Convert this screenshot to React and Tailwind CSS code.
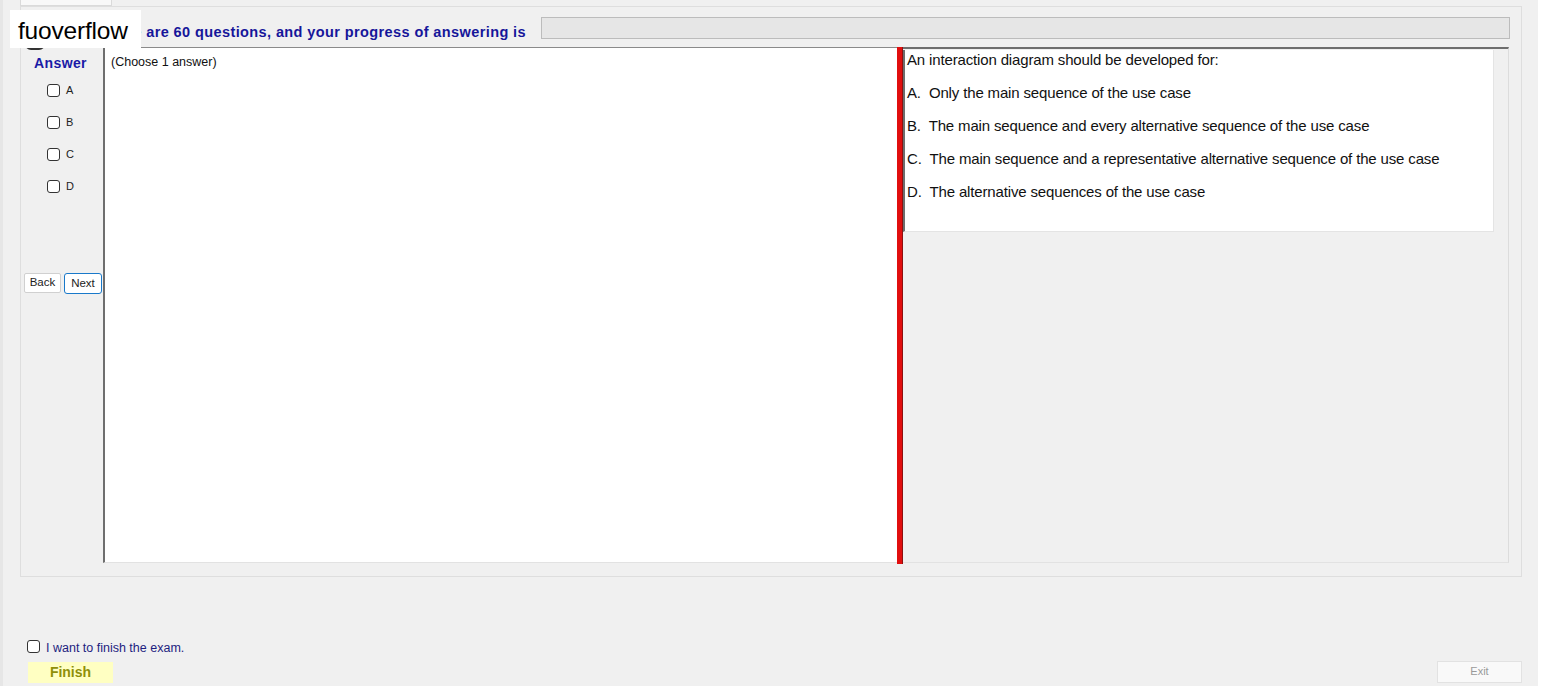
import React from "react";

const Box = () => (
  <span className="inline-block w-[13px] h-[13px] rounded-[3px] border border-[#333] bg-white" />
);

const options = [
  "A.  Only the main sequence of the use case",
  "B.  The main sequence and every alternative sequence of the use case",
  "C.  The main sequence and a representative alternative sequence of the use case",
  "D.  The alternative sequences of the use case",
];

export default function App() {
  return (
    <div className="relative w-[1542px] h-[690px] bg-white overflow-hidden font-['Liberation_Sans',Arial,sans-serif]">
      {/* Window */}
      <div className="w-[1538px] h-[686px] bg-[#f0f0f0] border-l-[3px] border-[#e6e6e6] flex flex-col">
        {/* tab strip */}
        <div className="h-[6px] flex">
          <div className="ml-[17px] w-[92px] h-[6px] bg-[#f8f8f8] border-x border-b border-[#dadada]" />
        </div>

        {/* Group box */}
        <div className="ml-[17px] w-[1502px] h-[571px] border border-[#dedede] bg-[#f0f0f0] flex flex-col">
          {/* header */}
          <div className="flex items-start mt-[10px] h-[22px]">
            <div className="w-[520px] flex justify-end pr-[15px] pt-[5px]">
              <span className="text-[14.5px] leading-[20px] font-bold text-[#16169a] whitespace-nowrap tracking-[0.4px]">
                There are 60 questions, and your progress of answering is
              </span>
            </div>
            <div className="w-[969px] h-[22px] border border-[#bcbcbc] bg-[#e6e6e6]" />
          </div>

          {/* content */}
          <div className="flex mt-[8px] ml-[1px] h-[516px]">
            {/* answer column */}
            <div className="w-[81px] flex flex-col">
              <div className="pl-[12px] pt-[6px] text-[14px] leading-[20px] font-bold text-[#1a1aa6] tracking-[0.4px]">Answer</div>
              <div className="flex flex-col gap-[19px] pl-[25px] mt-[11px]">
                {["A", "B", "C", "D"].map((l) => (
                  <label key={l} className="flex items-center gap-[6px] h-[13px]">
                    <Box />
                    <span className="text-[11px] text-[#222]">{l}</span>
                  </label>
                ))}
              </div>
              <div className="flex gap-[3px] pl-[2px] mt-[80px]">
                <button className="w-[37px] h-[20px] bg-white border border-[#d0d0d0] rounded-[2px] text-[11.5px] text-[#222]">
                  Back
                </button>
                <button className="w-[38px] h-[21px] bg-white border border-[#1979ca] rounded-[3px] text-[11.5px] text-[#222]">
                  Next
                </button>
              </div>
            </div>

            {/* main text area */}
            <div className="w-[794px] h-[516px] bg-white border-l-2 border-t border-b border-l-[#6e6e6e] border-t-[#8a8a8a] border-b-[#e2e2e2] pl-[6px] pt-[1px]">
              <span className="text-[12.5px] text-[#111]">(Choose 1 answer)</span>
            </div>

            {/* splitter */}
            <div className="w-[6px] h-[517px] bg-[#e10f0f] border-r border-[#8e1010]" />

            {/* right panel */}
            <div className="w-[606px] h-[516px] border-t-2 border-r border-b border-t-[#6e6e6e] border-r-[#dcdcdc] border-b-[#e2e2e2] bg-[#f0f0f0]">
              <div className="w-[591px] h-[182px] mt-[1px] bg-white border-l-2 border-r border-b border-l-[#6e6e6e] border-r-[#e4e4e4] border-b-[#e4e4e4] pl-[2px] pt-[2px]">
                <div className="text-[15px] text-[#111] leading-[16px] tracking-[-0.15px]">
                  An interaction diagram should be developed for:
                </div>
                {options.map((o) => (
                  <div key={o} className="text-[15px] text-[#111] leading-[16px] mt-[17px] whitespace-pre tracking-[-0.15px]">
                    {o}
                  </div>
                ))}
              </div>
            </div>
          </div>
        </div>

        {/* bottom */}
        <div className="mt-[63px] ml-[24px] flex items-center gap-[6px] h-[13px]">
          <Box />
          <span className="text-[12.5px] text-[#1e1e80] pt-[3px]">I want to finish the exam.</span>
        </div>
        <div className="flex justify-between items-center mt-[7px] pl-[25px] pr-[16px]">
          <button className="w-[85px] h-[21px] bg-[#ffffc2] text-[14px] font-bold text-[#8f8f0a] mt-[2px]">
            Finish
          </button>
          <button className="w-[85px] h-[22px] bg-[#f9f9f9] border border-[#e2e2e2] text-[11px] text-[#9a9a9a]">
            Exit
          </button>
        </div>
      </div>

      {/* partly hidden icon under the watermark */}
      <div className="absolute left-[25px] top-[38px] w-[20px] h-[12px] rounded-full border-2 border-[#333]" />

      {/* watermark */}
      <div className="absolute left-[10px] top-[10px] w-[131px] h-[38px] bg-white flex items-center pl-[8px] pt-[4px]">
        <span className="text-[24.5px] text-black tracking-[-0.2px]">fuoverflow</span>
      </div>
    </div>
  );
}
